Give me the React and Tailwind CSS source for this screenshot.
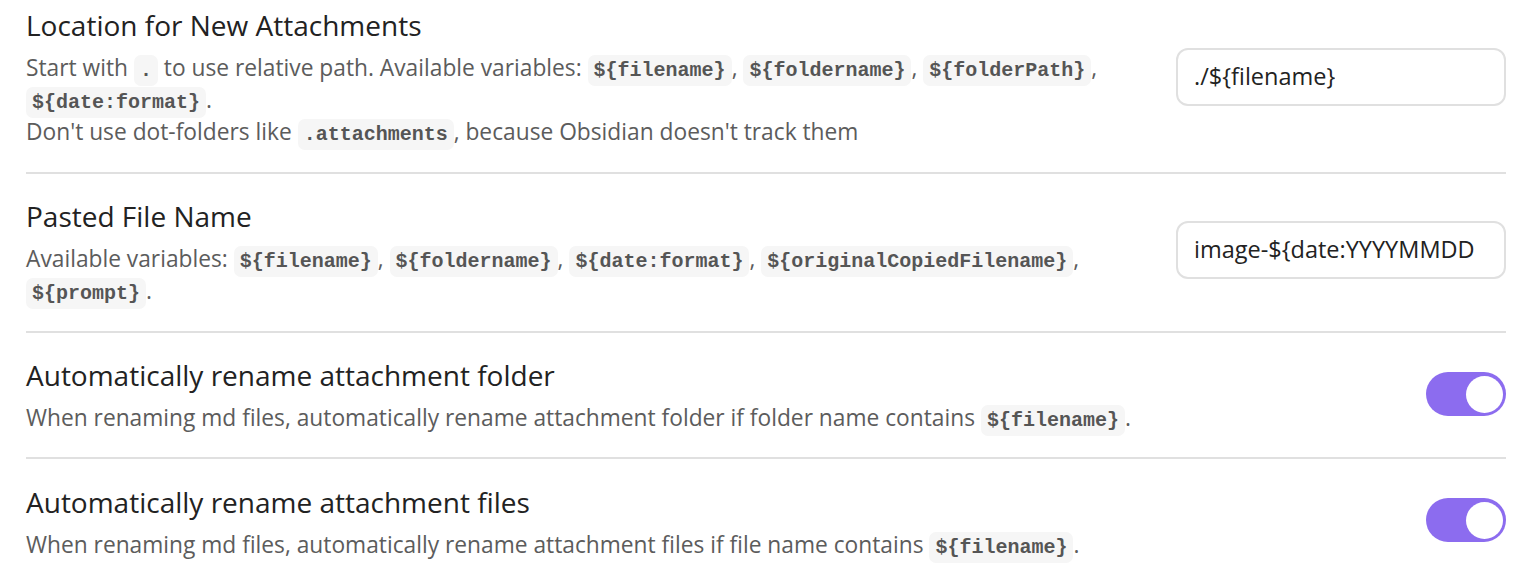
import React from "react";

const C = ({ children }) => (
  <code className="rounded-[7px] bg-[#f6f6f6] px-[6px] py-[4px] font-['Liberation_Mono','DejaVu_Sans_Mono',monospace] text-[20px] font-bold leading-none text-[#555555]">
    {children}
  </code>
);

const Toggle = ({ cls = "" }) => (
  <div className={"flex h-[44px] w-[80px] shrink-0 items-center justify-end rounded-full bg-[#8c6cef] pr-[3px] " + cls}>
    <div className="h-[37px] w-[37px] rounded-full bg-white" />
  </div>
);

const Input = ({ value, cls = "" }) => (
  <div className={"flex h-[58px] w-[330px] shrink-0 items-center overflow-hidden whitespace-nowrap rounded-[12px] border-2 border-[#e0e0e0] bg-white pl-[16px] pr-[16px] text-[23.5px] text-[#222222] " + cls}>
    <span className="overflow-hidden">{value}</span>
  </div>
);

const Row = ({ title, desc, control, first, pt, pb }) => (
  <div
    className={
      "flex items-center justify-between gap-10 " +
      (first ? "" : "border-t-2 border-[#e0e0e0] ")
    }
  >
    <div className={"flex-1 " + pt + " " + pb}>
      <div className="text-[28px] leading-[34px] text-[#222222]">{title}</div>
      <div className="mt-[10px] text-[22.75px] leading-[32px] text-[#5c5c5c]">{desc}</div>
    </div>
    {control}
  </div>
);

export default function App() {
  return (
    <div className="min-h-[565px] bg-white pl-[26px] pr-[27px] font-['Open_Sans','Noto_Sans',sans-serif]">
      <Row
        first
        pt="pt-[8px]"
        pb="pb-[24px]"
        title="Location for New Attachments"
        desc={
          <>
            Start with <C>.</C> to use relative path. Available variables: <C>{"${filename}"}</C>, <C>{"${foldername}"}</C>, <C>{"${folderPath}"}</C>,
            <br />
            <C>{"${date:format}"}</C>.
            <br />
            Don't use dot-folders like <C>.attachments</C>, because Obsidian doesn't track them
          </>
        }
        control={<Input value="./${filename}" cls="mb-[18px]" />}
      />
      <Row
        pt="pt-[25px]"
        pb="pb-[24px]"
        title="Pasted File Name"
        desc={
          <>
            Available variables: <C>{"${filename}"}</C>, <C>{"${foldername}"}</C>, <C>{"${date:format}"}</C>, <C>{"${originalCopiedFilename}"}</C>,
            <br />
            <C>{"${prompt}"}</C>.
          </>
        }
        control={<Input value="image-${date:YYYYMMDD" cls="mb-[5px]" />}
      />
      <Row
        pt="pt-[25px]"
        pb="pb-[23px]"
        title="Automatically rename attachment folder"
        desc={
          <>
            When renaming md files, automatically rename attachment folder if folder name contains <C>{"${filename}"}</C>.
          </>
        }
        control={<Toggle cls="mb-[2px]" />}
      />
      <Row
        pt="pt-[26px]"
        pb="pb-[20px]"
        title="Automatically rename attachment files"
        desc={
          <>
            When renaming md files, automatically rename attachment files if file name contains <C>{"${filename}"}</C>.
          </>
        }
        control={<Toggle />}
      />
    </div>
  );
}
